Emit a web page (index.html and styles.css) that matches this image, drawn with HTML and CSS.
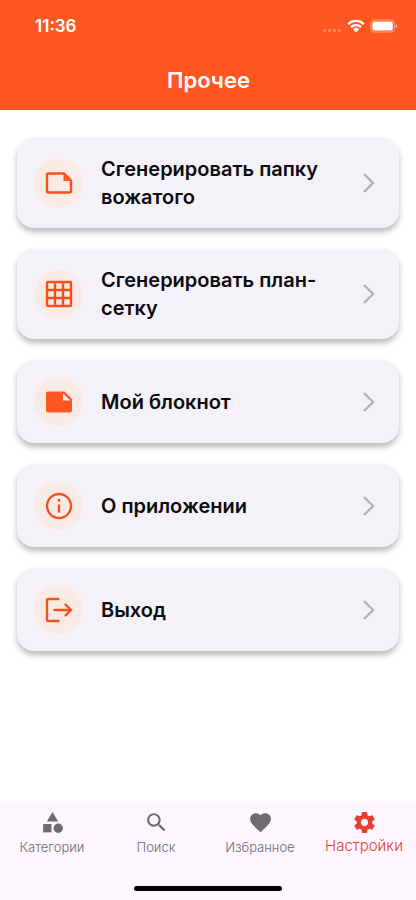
FILE: index.html
```html
<!DOCTYPE html>
<html lang="ru">
<head>
<meta charset="utf-8">
<meta name="viewport" content="width=device-width, initial-scale=1">
<title>Прочее</title>
<link rel="stylesheet" href="styles.css">
</head>
<body>
<header class="header">
  <div class="status">
    <span class="time">11:36</span>
    <div class="indicators">
      <svg class="dots" viewBox="0 0 20 14" aria-hidden="true"><g fill="#fff" opacity=".25"><rect x="1" y="10" width="3" height="3" rx="1"/><rect x="6" y="10" width="3" height="3" rx="1"/><rect x="11" y="10" width="3" height="3" rx="1"/><rect x="16" y="10" width="3" height="3" rx="1"/></g></svg>
      <svg class="wifi" viewBox="0 0 18 14" aria-hidden="true"><g fill="none" stroke="#fff" stroke-width="2.3"><path d="M1.2 5.1a11.2 11.2 0 0 1 15.6 0"/><path d="M4 8.1a7.2 7.2 0 0 1 10 0"/></g><path fill="#fff" d="M5.9 10.3a4.5 4.5 0 0 1 6.2 0L9 13.4z"/></svg>
      <svg class="battery" viewBox="0 0 28 14" aria-hidden="true"><rect x=".9" y="1" width="23.4" height="12" rx="3.6" fill="none" stroke="#fff" stroke-opacity=".45"/><rect x="2.4" y="2.5" width="20.4" height="9" rx="2.3" fill="#fff"/><path d="M25.6 5v4q1.5-.6 1.5-2t-1.5-2z" fill="#fff" opacity=".5"/></svg>
    </div>
  </div>
  <h1 class="title">Прочее</h1>
</header>
<main class="list">
  <button class="card" type="button">
    <span class="badge"><svg class="icon" viewBox="0 0 32 32" aria-hidden="true"><path d="M21 6.500H5.500Q4 6.500 4 8v16q0 1.500 1.500 1.500h21q1.500 0 1.500-1.500V13.500z"/><path class="solid" d="M20.500 6.500v7.500H28.500z"/></svg></span>
    <span class="label">Сгенерировать папку вожатого</span>
    <svg class="chevron" viewBox="0 0 14 22" aria-hidden="true"><path d="M2 2l9 9-9 9"/></svg>
  </button>
  <button class="card" type="button">
    <span class="badge"><svg class="icon" viewBox="0 0 32 32" aria-hidden="true"><rect x="4" y="4" width="24" height="24" rx="1"/><path d="M12 4v24M20 4v24M4 12h24M4 20h24"/></svg></span>
    <span class="label">Сгенерировать план-сетку</span>
    <svg class="chevron" viewBox="0 0 14 22" aria-hidden="true"><path d="M2 2l9 9-9 9"/></svg>
  </button>
  <button class="card" type="button">
    <span class="badge"><svg class="icon" viewBox="0 0 32 32" aria-hidden="true"><path class="solid" fill-rule="evenodd" d="M21.500 5.500H5Q3 5.500 3 7.500v17q0 2 2 2h22q2 0 2-2V13zM20 7.500l7.500 7H20z"/></svg></span>
    <span class="label">Мой блокнот</span>
    <svg class="chevron" viewBox="0 0 14 22" aria-hidden="true"><path d="M2 2l9 9-9 9"/></svg>
  </button>
  <button class="card" type="button">
    <span class="badge"><svg class="icon" viewBox="0 0 32 32" aria-hidden="true"><circle cx="16" cy="16" r="12"/><path d="M16 9v2.500M16 14.500V22.500"/></svg></span>
    <span class="label">О приложении</span>
    <svg class="chevron" viewBox="0 0 14 22" aria-hidden="true"><path d="M2 2l9 9-9 9"/></svg>
  </button>
  <button class="card" type="button">
    <span class="badge"><svg class="icon" viewBox="0 0 32 32" aria-hidden="true"><path stroke-linecap="round" d="M15.500 5H5.500Q4 5 4 6.500v19Q4 27 5.500 27h10M11.500 16H27.500M22.500 10.500L28 16l-5.500 5.500"/></svg></span>
    <span class="label">Выход</span>
    <svg class="chevron" viewBox="0 0 14 22" aria-hidden="true"><path d="M2 2l9 9-9 9"/></svg>
  </button>
</main>
<footer class="footer">
  <nav class="tabs">
    <a class="tab" href="#categories"><svg class="tab-icon" viewBox="0 0 24 24" aria-hidden="true"><path d="M12 2l-5.500 9h11z"/><circle cx="17.500" cy="17.500" r="4.500"/><path d="M3 13.500h8v8H3z"/></svg><span>Категории</span></a>
    <a class="tab" href="#search"><svg class="tab-icon" viewBox="0 0 24 24" aria-hidden="true"><path d="M15.500 14h-.790l-.280-.270C15.410 12.590 16 11.110 16 9.500 16 5.910 13.090 3 9.500 3S3 5.910 3 9.500 5.910 16 9.500 16c1.610 0 3.090-.590 4.230-1.570l.270.280v.790l5 4.990L20.490 19l-4.990-5zm-6 0C7.010 14 5 11.990 5 9.500S7.010 5 9.500 5 14 7.010 14 9.500 11.990 14 9.500 14z"/></svg><span>Поиск</span></a>
    <a class="tab" href="#favorites"><svg class="tab-icon" viewBox="0 0 24 24" aria-hidden="true"><path d="M12 21.350l-1.450-1.320C5.400 15.360 2 12.280 2 8.500 2 5.420 4.420 3 7.500 3c1.740 0 3.410.810 4.500 2.090C13.090 3.810 14.760 3 16.500 3 19.580 3 22 5.420 22 8.500c0 3.780-3.400 6.860-8.550 11.540L12 21.350z"/></svg><span>Избранное</span></a>
    <a class="tab active" href="#settings" aria-current="page"><svg class="tab-icon" viewBox="0 0 24 24" aria-hidden="true"><path d="M19.430 12.980c.04-.32.07-.64.07-.98s-.03-.66-.07-.98l2.110-1.650c.19-.15.24-.42.12-.64l-2-3.460c-.12-.22-.39-.3-.61-.22l-2.490 1c-.52-.4-1.080-.73-1.690-.98l-.38-2.650C14.460 2.180 14.250 2 14 2h-4c-.25 0-.46.18-.49.42l-.38 2.650c-.61.25-1.170.59-1.690.98l-2.490-1c-.23-.09-.49 0-.61.22l-2 3.460c-.13.22-.07.49.12.64l2.110 1.650c-.04.32-.07.65-.07.98s.03.66.07.98l-2.110 1.650c-.19.15-.24.42-.12.64l2 3.460c.12.22.39.3.61.22l2.490-1c.52.4 1.080.73 1.690.98l.38 2.650c.03.24.24.42.49.42h4c.25 0 .46-.18.49-.42l.38-2.650c.61-.25 1.170-.59 1.690-.98l2.490 1c.23.09.49 0 .61-.22l2-3.460c.12-.22.07-.49-.12-.64l-2.110-1.650zM12 15.500c-1.930 0-3.500-1.570-3.500-3.500s1.570-3.500 3.500-3.500 3.500 1.570 3.500 3.500-1.570 3.500-3.500 3.500z"/></svg><span>Настройки</span></a>
  </nav>
  <div class="home"></div>
</footer>
</body>
</html>
```
FILE: styles.css
```css
* { box-sizing: border-box; }
body {
  margin: 0;
  min-height: 100vh;
  display: flex;
  flex-direction: column;
  background: #fff;
  font-family: Inter, "Liberation Sans", sans-serif;
}
.header {
  background: #ff5722;
  color: #fff;
  padding: 14px 18px 16px 35px;
}
.status {
  display: flex;
  justify-content: space-between;
  align-items: center;
  height: 24px;
}
.time { font-size: 17px; font-weight: 600; }
.indicators { display: flex; align-items: center; gap: 5px; }
.dots { width: 20px; height: 14px; }
.wifi { width: 18px; height: 14px; }
.battery { width: 28px; height: 14px; }
.title {
  margin: 28px 16px 0 0;
  font-size: 22px;
  line-height: 28px;
  font-weight: 600;
  text-align: center;
}
.list {
  flex: 1;
  display: flex;
  flex-direction: column;
  gap: 21px;
  padding: 28px 17px;
}
.card {
  display: flex;
  align-items: center;
  gap: 18px;
  width: 100%;
  padding: 17px;
  border: 0;
  border-radius: 17px;
  background: #f5f1f9;
  box-shadow: 0 4px 6px rgba(0, 0, 0, .28);
  color: #0c0b0e;
  font: inherit;
  text-align: left;
}
.badge {
  flex: none;
  display: flex;
  align-items: center;
  justify-content: center;
  width: 49px;
  height: 49px;
  border-radius: 50%;
  background: #f9eae6;
}
.icon {
  width: 32px;
  height: 32px;
  fill: none;
  stroke: #f4511e;
  stroke-width: 2.4;
}
.solid { fill: #ff5722; stroke: none; }
.label {
  flex: 1;
  font-size: 20px;
  line-height: 28px;
  font-weight: 600;
}
.chevron {
  flex: none;
  width: 14px;
  height: 22px;
  margin-right: 6px;
  fill: none;
  stroke: #b3afb6;
  stroke-width: 2.3;
}
.footer {
  display: flex;
  flex-direction: column;
  align-items: center;
  background: #fdf6fe;
  padding: 9px 0;
}
.tabs {
  display: grid;
  grid-template-columns: repeat(4, 1fr);
  width: 100%;
}
.tab {
  display: flex;
  flex-direction: column;
  align-items: center;
  gap: 2px;
  color: #6f6a72;
  font-size: 13px;
  line-height: 20px;
  font-weight: 300;
  text-decoration: none;
}
.tab-icon { width: 25px; height: 25px; fill: currentColor; }
.active { color: #e53f36; font-size: 15px; line-height: 18px; }
.home {
  width: 148px;
  height: 5px;
  margin-top: 29px;
  border-radius: 3px;
  background: #000;
}
```
